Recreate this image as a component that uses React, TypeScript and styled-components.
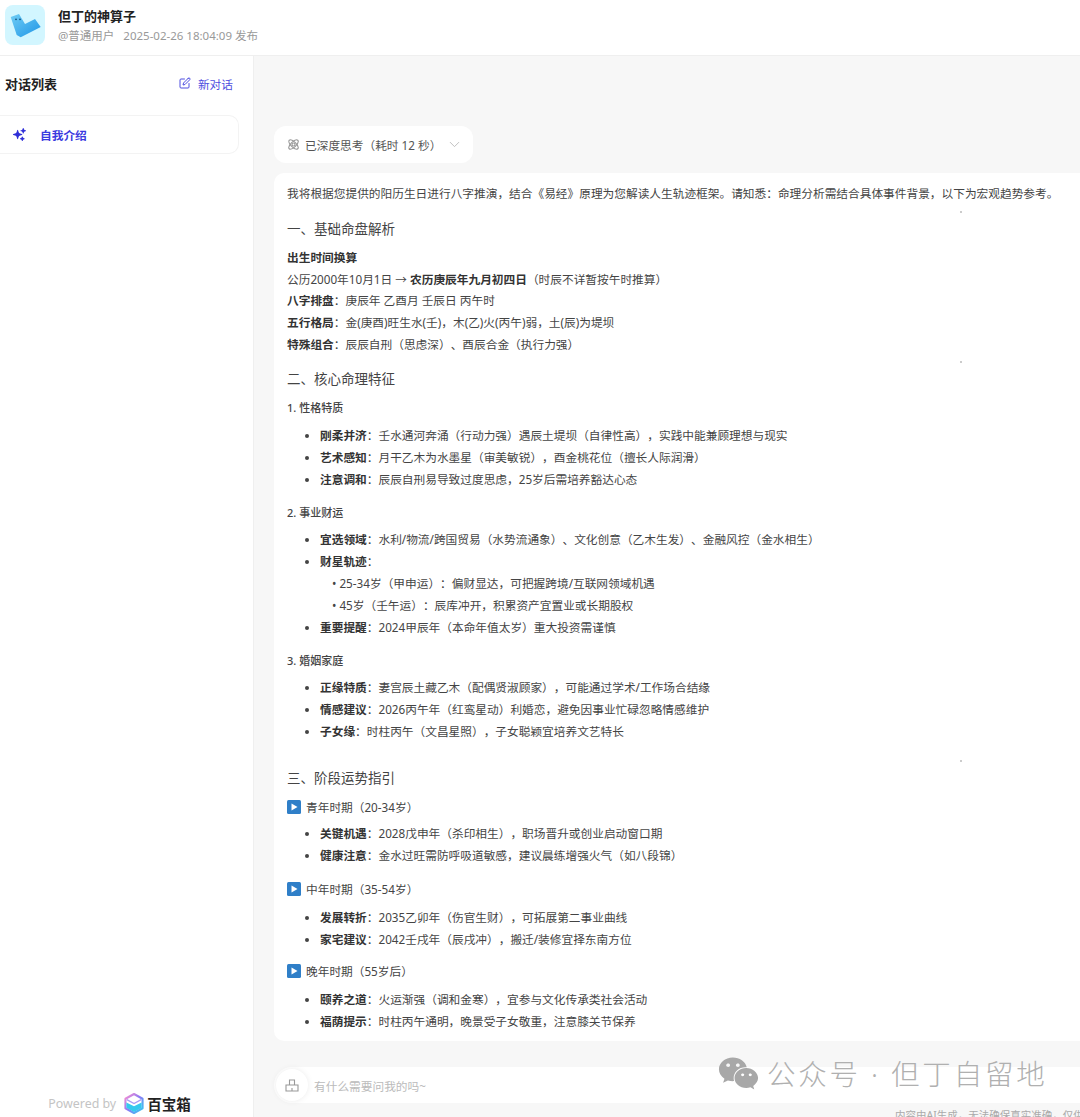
import React from "react";
import styled, { createGlobalStyle } from "styled-components";
import { FaWeixin } from "react-icons/fa";
import { FiEdit } from "react-icons/fi";
import { HiSparkles } from "react-icons/hi2";
import { LuChevronDown } from "react-icons/lu";

const GlobalStyle = createGlobalStyle`
  html, body {
    margin: 0;
    height: 100%;
    overflow: hidden;
    background: #fff;
    font-family: "Noto Sans", "Noto Sans CJK SC", sans-serif;
    color: #333;
    text-spacing-trim: space-all;
  }
  * { box-sizing: border-box; }
`;

const Page = styled.div`
  position: relative;
  width: 1080px;
  height: 1117px;
  display: flex;
  flex-direction: column;
  overflow: hidden;
`;

const Header = styled.header`
  height: 56px;
  flex: none;
  display: flex;
  align-items: flex-start;
  gap: 13px;
  padding: 5px 5px 0;
  border-bottom: 1px solid #efefef;
`;

const Avatar = styled.div`
  width: 40px;
  height: 40px;
  border-radius: 8px;
  background: #d2f6ff;
  display: flex;
`;

const HeaderText = styled.div`
  margin-top: 2px;
  display: flex;
  flex-direction: column;
  gap: 3px;
`;

const AppName = styled.div`
  font-size: 13px;
  line-height: 18px;
  font-weight: 700;
  color: #222;
`;

const Meta = styled.div`
  font-size: 11.5px;
  line-height: 16px;
  color: #999;
  display: flex;
  gap: 9px;
`;

const Body = styled.div`
  flex: 1;
  display: flex;
  min-height: 0;
`;

const Sidebar = styled.aside`
  width: 254px;
  flex: none;
  border-right: 1px solid #efefef;
  display: flex;
  flex-direction: column;
  padding: 18px 14px 0 0;
`;

const SidebarHead = styled.div`
  display: flex;
  align-items: center;
  justify-content: space-between;
  height: 18px;
  padding: 0 6px 0 5px;
`;

const SidebarTitle = styled.div`
  font-size: 13px;
  font-weight: 700;
  color: #222;
`;

const NewChat = styled.div`
  display: flex;
  align-items: center;
  gap: 7px;
  font-size: 11.7px;
  color: #4f4fe0;
`;

const ChatItem = styled.div`
  margin-top: 23px;
  height: 39px;
  border: 1px solid #f3f3f3;
  border-left: none;
  border-radius: 0 10px 10px 0;
  display: flex;
  align-items: center;
  gap: 13px;
  padding-left: 12px;
  padding-bottom: 1px;
  font-size: 11.7px;
  font-weight: 700;
  color: #3a3adf;
`;

const PoweredBy = styled.div`
  margin-top: auto;
  margin-bottom: 3px;
  height: 22px;
  display: flex;
  align-items: center;
  justify-content: center;
  gap: 8px;
  font-size: 12.4px;
  color: #c4c4c4;
`;

const BrandName = styled.span`
  margin-left: -5px;
  font-size: 14.5px;
  font-weight: 700;
  color: #222;
`;

const Main = styled.main`
  flex: 1;
  min-width: 0;
  background: #f7f7f7;
  padding: 70px 0 0 20px;
  display: flex;
  flex-direction: column;
  overflow: hidden;
`;

const ThinkPill = styled.div`
  width: 199px;
  height: 37px;
  flex: none;
  background: #fff;
  border-radius: 12px;
  display: flex;
  align-items: center;
  padding-left: 13px;
  gap: 5px;
  font-size: 11.7px;
  color: #555;
`;

const PillChevron = styled(LuChevronDown)`
  font-size: 17px;
  stroke-width: 1.3;
  color: #bbb;
`;

const Card = styled.article`
  margin-top: 10px;
  width: 840px;
  flex: none;
  background: #fff;
  border-radius: 10px 0 0 10px;
  padding: 10px 13px 9px;
  font-size: 11.7px;
  line-height: 21.8px;
  color: #444;
`;

const Para = styled.p`
  margin: 0;
  white-space: nowrap;
`;

const SectionTitle = styled.h2<{ $gap?: number }>`
  position: relative;
  margin: ${({ $gap }) => $gap ?? 12}px 0 6px;
  font-size: 13.5px;
  line-height: 24px;
  font-weight: 400;
  color: #444;

  &::before {
    content: "";
    position: absolute;
    left: 673px;
    top: -6px;
    width: 2px;
    height: 2px;
    background: #ccc;
  }
`;

const SubTitle = styled.h3<{ $gap?: number; $after?: number }>`
  margin: ${({ $gap }) => $gap ?? 13}px 0 ${({ $after }) => $after ?? 5}px;
  font-size: 11px;
  line-height: 20px;
  font-weight: 500;
  color: #444;
`;

const Period = styled.div<{ $gap?: number; $after?: number }>`
  margin: ${({ $gap }) => $gap ?? 12}px 0 ${({ $after }) => $after ?? 7}px;
  display: flex;
  align-items: center;
  gap: 5px;
  line-height: 20px;
`;

const List = styled.ul`
  margin: 0;
  padding: 0 0 0 33px;
  list-style: disc;
  line-height: 22px;
`;

const SubList = styled.div`
  padding-left: 12px;
`;

const Strong = styled.b`
  font-weight: 700;
  color: #333;
`;

const InputBar = styled.div`
  margin-top: 26px;
  width: 840px;
  height: 36px;
  flex: none;
  background: #fff;
  border-radius: 18px 0 0 18px;
  display: flex;
  align-items: center;
  gap: 6px;
  padding-left: 2px;
  font-size: 11.7px;
  color: #bbb;
`;

const ToolButton = styled.div`
  width: 32px;
  height: 32px;
  border-radius: 50%;
  background: #fff;
  box-shadow: 0 0 6px rgba(0, 0, 0, 0.08);
  display: flex;
  align-items: center;
  justify-content: center;
`;

const Disclaimer = styled.div`
  margin-top: 5px;
  padding-left: 621px;
  font-size: 10.5px;
  line-height: 14px;
  color: #aaa;
  white-space: nowrap;
`;

const Watermark = styled.div`
  position: absolute;
  left: 718px;
  top: 1053px;
  display: flex;
  align-items: center;
  gap: 8px;
  font-size: 28.5px;
  font-weight: 300;
  letter-spacing: 2.8px;
  line-height: 40px;
  color: #b0b0b0;
  white-space: nowrap;
`;

const WeixinIcon = styled(FaWeixin)`
  font-size: 41px;
  color: #a8a8a8;
`;

const AppLogo = () => (
  <svg width="40" height="40" viewBox="0 0 40 40">
    <defs>
      <linearGradient id="lg" x1="0" y1="0" x2="1" y2="1">
        <stop offset="0" stopColor="#6fcdf5" />
        <stop offset="1" stopColor="#1f95e6" />
      </linearGradient>
    </defs>
    <path d="M5.7 12 L14 9 L20 19 L30 14 L35.7 22 L15.7 32.3 L11.7 30 Z" fill="url(#lg)" strokeLinejoin="round" />
    <circle cx="11" cy="14.3" r="0.9" fill="#14507e" />
    <circle cx="15" cy="14.3" r="0.9" fill="#14507e" />
  </svg>
);

const ThinkIcon = () => (
  <svg width="13" height="13" viewBox="0 0 13 13" fill="none" stroke="#999" strokeWidth="1.1">
    <ellipse cx="6.5" cy="6.5" rx="6" ry="2.6" transform="rotate(45 6.5 6.5)" />
    <ellipse cx="6.5" cy="6.5" rx="6" ry="2.6" transform="rotate(-45 6.5 6.5)" />
    <circle cx="6.5" cy="6.5" r="1.5" />
  </svg>
);

const BrandLogo = () => (
  <svg width="20" height="21" viewBox="0 0 21 22">
    <defs>
      <linearGradient id="bl" x1="0" y1="0" x2="1" y2="1">
        <stop offset="0" stopColor="#ff8fd0" />
        <stop offset="0.5" stopColor="#8a7bf5" />
        <stop offset="1" stopColor="#2fd0f0" />
      </linearGradient>
    </defs>
    <path d="M10.5 1 L19.5 6 V16 L10.5 21 L1.5 16 V6 Z" fill="#fff" stroke="url(#bl)" strokeWidth="2.2" strokeLinejoin="round" />
    <path d="M2.5 10 L10.5 14 L18.5 10 V15.5 L10.5 20 L2.5 15.5 Z" fill="#35c9ee" />
    <path d="M3 7 L10.5 11 L18 7" fill="none" stroke="#a99cf5" strokeWidth="1.4" />
  </svg>
);

const PlayMark = () => (
  <svg width="14" height="14" viewBox="0 0 14 14">
    <rect width="14" height="14" rx="1.5" fill="#2f7fc8" />
    <path d="M4.5 3.5 L10.5 7 L4.5 10.5 Z" fill="#fff" />
  </svg>
);

const ToolIcon = () => (
  <svg width="14" height="14" viewBox="0 0 14 14" fill="none" stroke="#999" strokeWidth="1.1">
    <path d="M1 7 H13 V13 H1 Z M4.5 7 V2 H9.5 V7 M7 10 V13" />
  </svg>
);

export default function App() {
  return (
    <Page>
      <GlobalStyle />
      <Header>
        <Avatar>
          <AppLogo />
        </Avatar>
        <HeaderText>
          <AppName>但丁的神算子</AppName>
          <Meta>
            <span>@普通用户</span>
            <span>2025-02-26 18:04:09 发布</span>
          </Meta>
        </HeaderText>
      </Header>
      <Body>
        <Sidebar>
          <SidebarHead>
            <SidebarTitle>对话列表</SidebarTitle>
            <NewChat>
              <FiEdit size={12} />
              新对话
            </NewChat>
          </SidebarHead>
          <ChatItem>
            <HiSparkles size={15} color="#2f2fd8" />
            自我介绍
          </ChatItem>
          <PoweredBy>
            Powered by
            <BrandLogo />
            <BrandName>百宝箱</BrandName>
          </PoweredBy>
        </Sidebar>
        <Main>
          <ThinkPill>
            <ThinkIcon />
            已深度思考（耗时 12 秒）
            <PillChevron />
          </ThinkPill>
          <Card>
            <Para>我将根据您提供的阳历生日进行八字推演，结合《易经》原理为您解读人生轨迹框架。请知悉：命理分析需结合具体事件背景，以下为宏观趋势参考。</Para>
            <SectionTitle>一、基础命盘解析</SectionTitle>
            <Para><Strong>出生时间换算</Strong></Para>
            <Para>公历2000年10月1日 → <Strong>农历庚辰年九月初四日</Strong>（时辰不详暂按午时推算）</Para>
            <Para><Strong>八字排盘</Strong>：庚辰年 乙酉月 壬辰日 丙午时</Para>
            <Para><Strong>五行格局</Strong>：金(庚酉)旺生水(壬)，木(乙)火(丙午)弱，土(辰)为堤坝</Para>
            <Para><Strong>特殊组合</Strong>：辰辰自刑（思虑深）、酉辰合金（执行力强）</Para>
            <SectionTitle $gap={11}>二、核心命理特征</SectionTitle>
            <SubTitle $gap={7} $after={6.5}>1. 性格特质</SubTitle>
            <List>
              <li><Strong>刚柔并济</Strong>：壬水通河奔涌（行动力强）遇辰土堤坝（自律性高），实践中能兼顾理想与现实</li>
              <li><Strong>艺术感知</Strong>：月干乙木为水墨星（审美敏锐），酉金桃花位（擅长人际润滑）</li>
              <li><Strong>注意调和</Strong>：辰辰自刑易导致过度思虑，25岁后需培养豁达心态</li>
            </List>
            <SubTitle>2. 事业财运</SubTitle>
            <List>
              <li><Strong>宜选领域</Strong>：水利/物流/跨国贸易（水势流通象）、文化创意（乙木生发）、金融风控（金水相生）</li>
              <li>
                <Strong>财星轨迹</Strong>：
                <SubList>• 25-34岁（甲申运）：偏财显达，可把握跨境/互联网领域机遇</SubList>
                <SubList>• 45岁（壬午运）：辰库冲开，积累资产宜置业或长期股权</SubList>
              </li>
              <li><Strong>重要提醒</Strong>：2024甲辰年（本命年值太岁）重大投资需谨慎</li>
            </List>
            <SubTitle>3. 婚姻家庭</SubTitle>
            <List>
              <li><Strong>正缘特质</Strong>：妻宫辰土藏乙木（配偶贤淑顾家），可能通过学术/工作场合结缘</li>
              <li><Strong>情感建议</Strong>：2026丙午年（红鸾星动）利婚恋，避免因事业忙碌忽略情感维护</li>
              <li><Strong>子女缘</Strong>：时柱丙午（文昌星照），子女聪颖宜培养文艺特长</li>
            </List>
            <SectionTitle $gap={24}>三、阶段运势指引</SectionTitle>
            <Period $gap={7} $after={5}><PlayMark />青年时期（20-34岁）</Period>
            <List>
              <li><Strong>关键机遇</Strong>：2028戊申年（杀印相生），职场晋升或创业启动窗口期</li>
              <li><Strong>健康注意</Strong>：金水过旺需防呼吸道敏感，建议晨练增强火气（如八段锦）</li>
            </List>
            <Period $gap={13}><PlayMark />中年时期（35-54岁）</Period>
            <List>
              <li><Strong>发展转折</Strong>：2035乙卯年（伤官生财），可拓展第二事业曲线</li>
              <li><Strong>家宅建议</Strong>：2042壬戌年（辰戌冲），搬迁/装修宜择东南方位</li>
            </List>
            <Period $gap={11}><PlayMark />晚年时期（55岁后）</Period>
            <List>
              <li><Strong>颐养之道</Strong>：火运渐强（调和金寒），宜参与文化传承类社会活动</li>
              <li><Strong>福荫提示</Strong>：时柱丙午通明，晚景受子女敬重，注意膝关节保养</li>
            </List>
          </Card>
          <InputBar>
            <ToolButton>
              <ToolIcon />
            </ToolButton>
            有什么需要问我的吗~
          </InputBar>
          <Disclaimer>内容由AI生成，无法确保真实准确，仅供参考</Disclaimer>
        </Main>
      </Body>
      <Watermark>
        <WeixinIcon />
        公众号 · 但丁自留地
      </Watermark>
    </Page>
  );
}
